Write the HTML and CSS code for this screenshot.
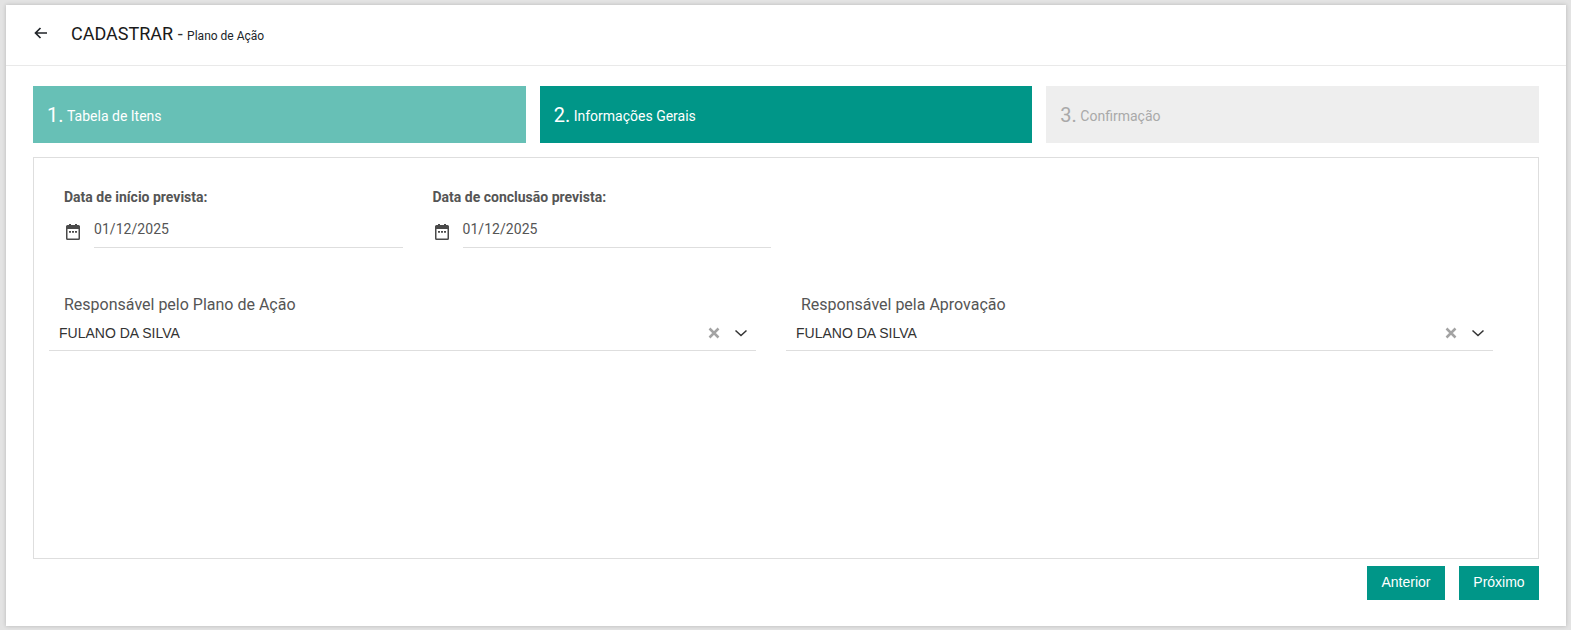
FILE: index.html
```html
<!DOCTYPE html>
<html lang="pt-BR">
<head>
<meta charset="utf-8">
<title>Cadastrar - Plano de Ação</title>
<link rel="stylesheet" href="styles.css">
</head>
<body>
<main class="card">
  <header class="head">
    <svg class="back" viewBox="0 0 14 12" width="14" height="12"><path d="M13 6H2M6.500 1 1.500 6l5 5"/></svg>
    <h1 class="title">CADASTRAR <span class="dash">-</span> <small class="sub">Plano de Ação</small></h1>
  </header>
  <div class="content">
    <ol class="steps">
      <li class="step done"><b>1.</b><span class="step-text">Tabela de Itens</span></li>
      <li class="step active"><b>2.</b><span class="step-text">Informações Gerais</span></li>
      <li class="step todo"><b>3.</b><span class="step-text">Confirmação</span></li>
    </ol>
    <section class="panel">
      <div class="dates">
        <div class="date">
          <label class="date-label">Data de início prevista:</label>
          <div class="date-row">
            <svg class="cal" viewBox="0 0 16 16" width="16" height="16"><path fill-rule="evenodd" d="M4 0h2v1h4V0h2v1h1.500A1.500 1.500 0 0 1 15 2.500v12a1.500 1.500 0 0 1-1.500 1.500h-11A1.500 1.500 0 0 1 1 14.500v-12A1.500 1.500 0 0 1 2.500 1H4zM2.500 5v9.500h11V5zM4 7h2v1.700H4zm3 0h2v1.700H7zm3 0h2v1.700h-2z"/></svg>
            <div class="date-val">01/12/2025</div>
          </div>
        </div>
        <div class="date">
          <label class="date-label">Data de conclusão prevista:</label>
          <div class="date-row">
            <svg class="cal" viewBox="0 0 16 16" width="16" height="16"><path fill-rule="evenodd" d="M4 0h2v1h4V0h2v1h1.500A1.500 1.500 0 0 1 15 2.500v12a1.500 1.500 0 0 1-1.500 1.500h-11A1.500 1.500 0 0 1 1 14.500v-12A1.500 1.500 0 0 1 2.500 1H4zM2.500 5v9.500h11V5zM4 7h2v1.700H4zm3 0h2v1.700H7zm3 0h2v1.700h-2z"/></svg>
            <div class="date-val">01/12/2025</div>
          </div>
        </div>
      </div>
      <div class="selects">
        <div class="field">
          <label class="field-label">Responsável pelo Plano de Ação</label>
          <div class="select">
            <span class="select-val">FULANO DA SILVA</span>
            <svg class="x" viewBox="0 0 12 12" width="12" height="12"><path d="M1.500 1.500l9 9M10.500 1.500l-9 9"/></svg>
            <svg class="chev" viewBox="0 0 14 8" width="14" height="8"><path d="M1.500 1.500 7 6.500l5.500-5"/></svg>
          </div>
        </div>
        <div class="field">
          <label class="field-label">Responsável pela Aprovação</label>
          <div class="select">
            <span class="select-val">FULANO DA SILVA</span>
            <svg class="x" viewBox="0 0 12 12" width="12" height="12"><path d="M1.500 1.500l9 9M10.500 1.500l-9 9"/></svg>
            <svg class="chev" viewBox="0 0 14 8" width="14" height="8"><path d="M1.500 1.500 7 6.500l5.500-5"/></svg>
          </div>
        </div>
      </div>
    </section>
    <div class="actions">
      <button class="btn btn-prev">Anterior</button>
      <button class="btn btn-next">Próximo</button>
    </div>
  </div>
</main>
</body>
</html>
```

FILE: styles.css
```css
* { box-sizing: border-box; }
html, body { height: 100%; }
body {
  margin: 0;
  background: #e3e3e3;
  padding: 5px 5px 4px 6px;
  font-family: Roboto, "Liberation Sans", sans-serif;
  overflow: hidden;
}
.card {
  height: 621px;
  background: #fff;
  box-shadow: 0 0 4px rgba(0,0,0,.2);
}
.head {
  height: 61px;
  border-bottom: 1px solid #e9e9e9;
  display: flex;
  align-items: center;
  padding: 0 0 4px 28px;
  gap: 23px;
}
.back { fill: none; stroke: #212529; stroke-width: 1.700; flex: none; }
.title { margin: 0; font-size: 18px; font-weight: 400; color: #1a1a1a; }
.dash { color: #333; }
.sub { font-size: 12px; color: #212529; }
.content { padding: 20px 27px 0; }
.steps {
  list-style: none;
  margin: 0;
  padding: 0;
  display: grid;
  grid-template-columns: repeat(3, 1fr);
  gap: 14px;
}
.step {
  height: 57px;
  display: flex;
  align-items: center;
  gap: 3.500px;
  padding-left: 14px;
  font-size: 14px;
  color: #fff;
}
.step b { font-size: 20px; font-weight: 400; }
.step-text { margin-top: 2px; }
.done { background: #67c0b6; }
.active { background: #009688; }
.todo { background: #eeeeee; color: #a9a9a9; }
.panel {
  margin-top: 14px;
  height: 402px;
  border: 1px solid #dedede;
  padding: 31px 15px 0;
}
.dates { display: flex; gap: 30px; padding-left: 15px; }
.date { width: 338.500px; }
.date-label { display: block; font-size: 14px; font-weight: 700; color: #555; line-height: 17px; }
.date-row { display: flex; margin-top: 12px; align-items: flex-start; gap: 13px; }
.cal { fill: #4a4a4a; flex: none; margin: 6px 0 0 1px; }
.date-val {
  flex: 1;
  height: 30px;
  padding-top: 1px;
  border-bottom: 1px solid #dedede;
  font-size: 14px;
  line-height: 20px;
  color: #555;
  letter-spacing: .05px;
}
.selects { display: flex; gap: 30px; margin-top: 47px; }
.field { width: 707px; }
.field-label { display: block; padding-left: 15px; font-size: 16px; line-height: 19px; color: #555; }
.select {
  display: flex;
  align-items: center;
  height: 35px;
  margin-top: 2px;
  padding: 0 8px 0 10px;
  border-bottom: 1px solid #dedede;
}
.select-val { flex: 1; font-family: "Liberation Sans", Arial, sans-serif; font-size: 14px; color: #333; }
.x { fill: none; stroke: #a3a3a3; stroke-width: 2.500; }
.chev { fill: none; stroke: #333; stroke-width: 1.500; margin-left: 14px; }
.actions { display: flex; justify-content: flex-end; gap: 14px; margin-top: 7px; }
.btn {
  height: 34px;
  border: 0;
  background: #009688;
  color: #fff;
  font-family: "Liberation Sans", Arial, sans-serif;
  font-size: 14px;
  padding: 0 0 2px;
}
.btn-prev { width: 78px; }
.btn-next { width: 80px; }
```
